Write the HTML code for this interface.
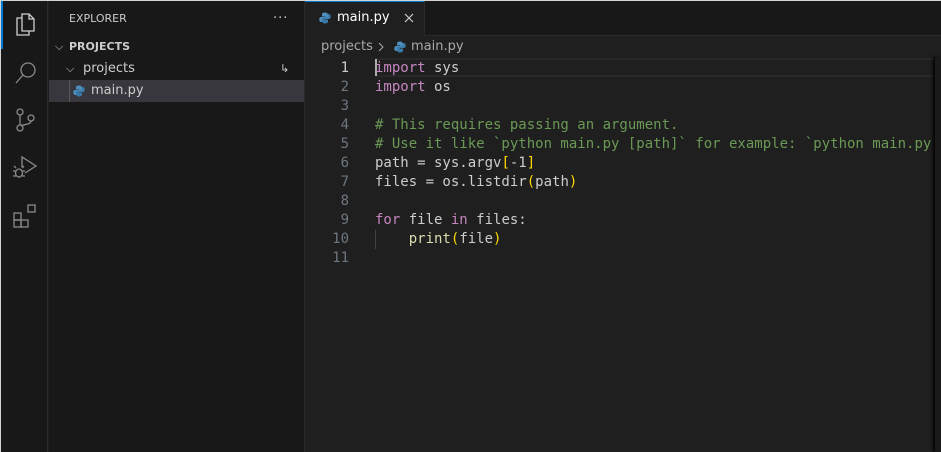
<!DOCTYPE html>
<html><head><meta charset="utf-8"><style>
*{margin:0;padding:0;box-sizing:border-box}
body{width:941px;height:452px;background:#1f1f1f;overflow:hidden;position:relative;font-family:"DejaVu Sans","Liberation Sans",sans-serif;color:#ccc}
.abs{position:absolute}
#frameT{left:0;top:0;width:941px;height:1px;background:#d4d4d4}
#frameL{left:0;top:0;width:1px;height:452px;background:#d4d4d4}
#act{left:1px;top:1px;width:47px;height:451px;background:#181818;border-right:1px solid #2b2b2b}
#side{left:49px;top:1px;width:256px;height:451px;background:#181818;border-right:1px solid #2b2b2b}
#tabs{left:305px;top:1px;width:636px;height:35px;background:#181818;border-bottom:1px solid #2b2b2b}
#tab{left:305px;top:1px;width:120px;height:35px;background:#1f1f1f;border-right:1px solid #2b2b2b;border-top:1px solid #0078d4}
.code{font-family:"DejaVu Sans Mono","Liberation Mono",monospace;font-size:14px;line-height:19px;white-space:pre}
.ln{left:305px;width:44px;text-align:right;color:#6e7681}
.k{color:#c586c0}.c{color:#6a9955}.f{color:#dcdcaa}.b{color:#ffd700}.t{color:#ccc}
</style></head><body>
<div id="frameT" class="abs"></div><div id="frameL" class="abs"></div>
<div id="act" class="abs"></div>
<div class="abs" style="left:1px;top:1px;width:2px;height:48px;background:#0078d4"></div>
<svg class="abs" style="left:1px;top:0" width="47" height="240" fill="none" stroke="#8a8a8a" stroke-width="1.3">
<g stroke="#d0d0d0"><path d="M21 14h7l5 5v12h-12z M28 14v5h5"/><path d="M21 18h-5v17h12v-4"/></g>
<circle cx="27" cy="70" r="7"/><path d="M22 75l-7 8"/>
<circle cx="19" cy="112" r="3"/><circle cx="19" cy="128" r="3"/><circle cx="30" cy="118" r="3"/><path d="M19 115v10M30 121c0 4-8 3-10 5"/>
<path d="M21 167v-10l14 9-11 7"/><ellipse cx="18" cy="173" rx="3.5" ry="4"/><path d="M12 171h3M21 171h3M12 176h3M21 176h3M15 168l-2-2M21 168l2-2"/>
<rect x="13" y="213" width="7" height="7"/><rect x="13" y="220" width="7" height="7"/><rect x="20" y="220" width="7" height="7"/><rect x="27" y="205" width="7" height="7"/>
</svg>
<div id="side" class="abs"></div>
<div class="abs" style="left:69px;top:12px;font-size:11px;color:#ccc">EXPLORER</div>
<div class="abs" style="left:273px;top:11px;font-size:13px;color:#ccc;letter-spacing:1px">···</div>
<div class="abs" style="left:55px;top:40px;font-size:11px;font-weight:bold;color:#ccc"><span style="font-weight:normal;display:inline-block;width:14px">⌵</span>PROJECTS</div>
<div class="abs" style="left:66px;top:61px;font-size:13px;color:#ccc"><span style="display:inline-block;width:17px;font-size:11px">⌵</span>projects</div>
<div class="abs" style="left:280px;top:62px;font-size:11px;color:#ccc">↳</div>
<div class="abs" style="left:49px;top:80px;width:255px;height:22px;background:#37373d"></div>
<div class="abs" style="left:69px;top:80px;width:1px;height:22px;background:#585858"></div>
<svg class="abs" style="left:73px;top:85px" width="12" height="12" viewBox="0 0 12 12"><path d="M6 0.5C3 .5 3 2 3 3v1.5h3.2V5H2C.6 5 .3 6.5.3 7.5S.8 10 2 10h1V8.3C3 7 4 6.3 5 6.3h2.6C8.6 6.3 9 5.6 9 4.8V3C9 1.5 7.8.5 6 .5z" fill="#4d8ebd"/><path d="M6 11.5c3 0 3-1.5 3-2.5V7.5H5.8V7H10c1.4 0 1.7-1.5 1.7-2.5S11.2 2 10 2H9v1.7C9 5 8 5.7 7 5.7H4.4C3.4 5.7 3 6.4 3 7.2V9c0 1.5 1.2 2.5 3 2.5z" fill="#3a78a8"/></svg>
<div class="abs" style="left:91px;top:83px;font-size:13px;color:#ccc">main.py</div>
<div id="tabs" class="abs"></div>
<div id="tab" class="abs"></div>
<svg class="abs" style="left:319px;top:12px" width="12" height="12" viewBox="0 0 12 12"><path d="M6 0.5C3 .5 3 2 3 3v1.5h3.2V5H2C.6 5 .3 6.5.3 7.5S.8 10 2 10h1V8.3C3 7 4 6.3 5 6.3h2.6C8.6 6.3 9 5.6 9 4.8V3C9 1.5 7.8.5 6 .5z" fill="#4d8ebd"/><path d="M6 11.5c3 0 3-1.5 3-2.5V7.5H5.8V7H10c1.4 0 1.7-1.5 1.7-2.5S11.2 2 10 2H9v1.7C9 5 8 5.7 7 5.7H4.4C3.4 5.7 3 6.4 3 7.2V9c0 1.5 1.2 2.5 3 2.5z" fill="#3a78a8"/></svg>
<div class="abs" style="left:337px;top:10px;font-size:13px;color:#fff">main.py</div>
<svg class="abs" style="left:404px;top:13px" width="10" height="10"><path d="M1 1l8 8M9 1l-8 8" stroke="#ccc" stroke-width="1.2"/></svg>
<div class="abs" style="left:321px;top:39px;font-size:13px;color:#a9a9a9">projects</div>
<svg class="abs" style="left:377px;top:42px" width="8" height="10"><path d="M2 1l4 4-4 4" stroke="#a9a9a9" fill="none" stroke-width="1"/></svg>
<svg class="abs" style="left:394px;top:41px" width="12" height="12" viewBox="0 0 12 12"><path d="M6 0.5C3 .5 3 2 3 3v1.5h3.2V5H2C.6 5 .3 6.5.3 7.5S.8 10 2 10h1V8.3C3 7 4 6.3 5 6.3h2.6C8.6 6.3 9 5.6 9 4.8V3C9 1.5 7.8.5 6 .5z" fill="#4d8ebd"/><path d="M6 11.5c3 0 3-1.5 3-2.5V7.5H5.8V7H10c1.4 0 1.7-1.5 1.7-2.5S11.2 2 10 2H9v1.7C9 5 8 5.7 7 5.7H4.4C3.4 5.7 3 6.4 3 7.2V9c0 1.5 1.2 2.5 3 2.5z" fill="#3a78a8"/></svg>
<div class="abs" style="left:411px;top:39px;font-size:13px;color:#a9a9a9">main.py</div>
<div class="abs" style="left:375px;top:58px;width:560px;height:19px;border-top:2px solid #282828;border-bottom:2px solid #282828"></div>
<div class="abs" style="left:935px;top:57px;width:6px;height:395px;background:#1a1a1a;box-shadow:-2px 0 3px #000"></div>
<div class="abs" style="left:375px;top:59px;width:2px;height:17px;background:#aeafad"></div>
<div class="abs" style="left:375px;top:230px;width:1px;height:19px;background:#404040"></div>
<div class="abs code ln" style="top:59px"><span style="color:#ccc">1</span>
2
3
4
5
6
7
8
9
10
11</div>
<div class="abs code t" style="left:375px;top:59px"><span class="k">import</span> sys
<span class="k">import</span> os

<span class="c"># This requires passing an argument.</span>
<span class="c"># Use it like `python main.py [path]` for example: `python main.py</span>
path = sys.argv<span class="b">[</span>-1<span class="b">]</span>
files = os.listdir<span class="b">(</span>path<span class="b">)</span>

<span class="k">for</span> file <span class="k">in</span> files:
    <span class="f">print</span><span class="b">(</span>file<span class="b">)</span></div>
</body></html>
